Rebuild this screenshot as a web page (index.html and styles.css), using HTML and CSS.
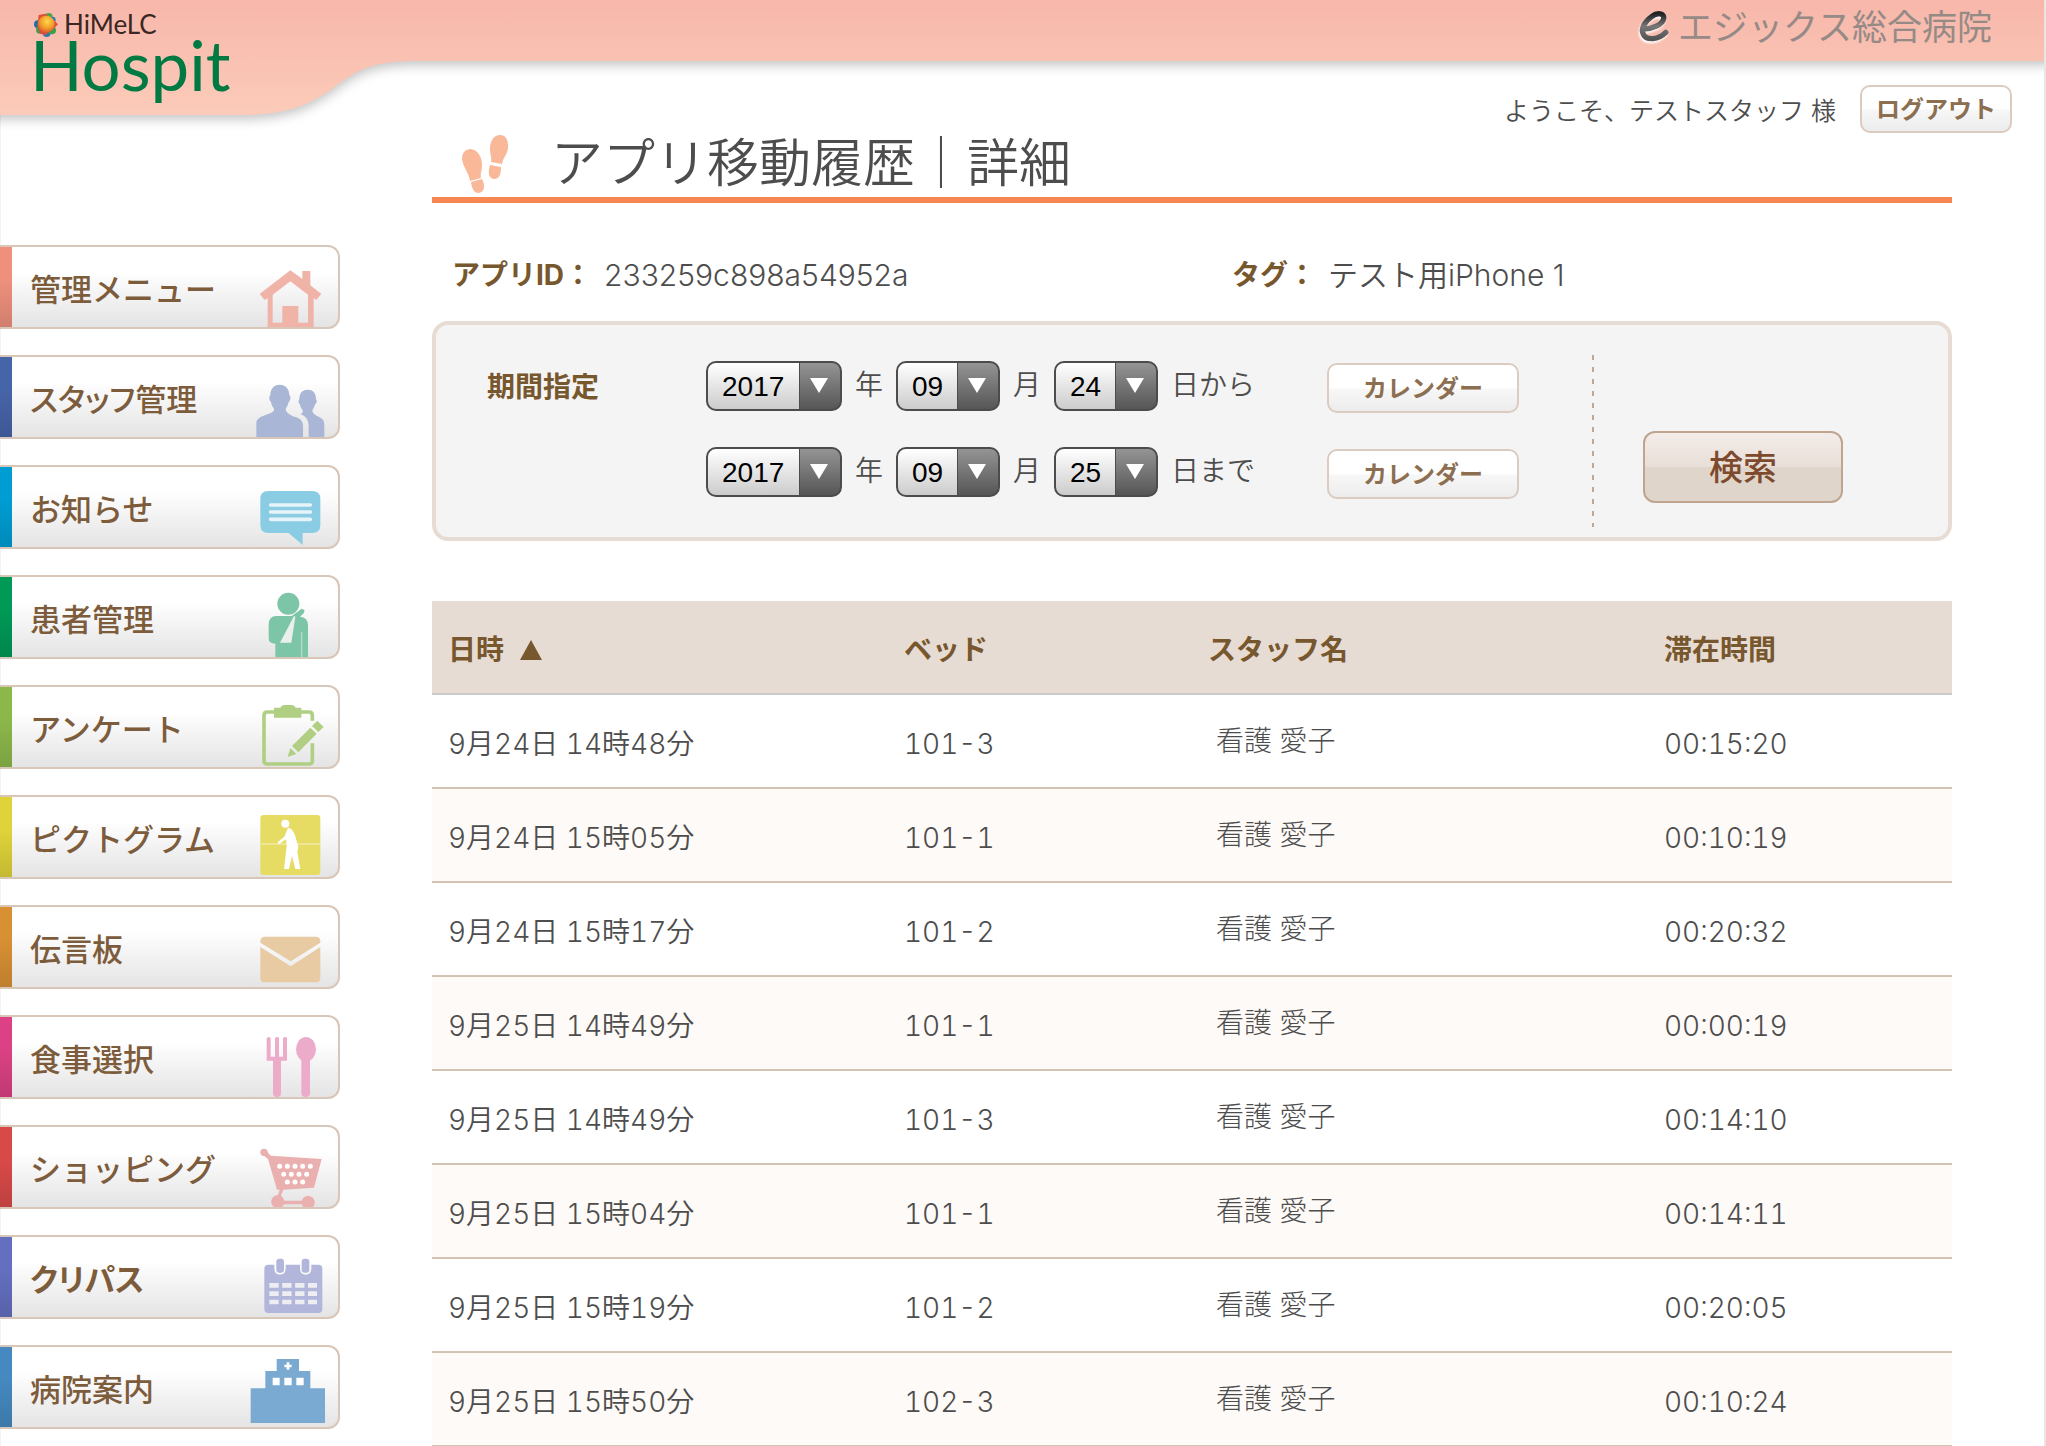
FILE: index.html
```html
<!DOCTYPE html>
<html lang="ja">
<head>
<meta charset="utf-8">
<meta name="viewport" content="width=device-width, initial-scale=1">
<title>アプリ移動履歴｜詳細</title>
<link rel="stylesheet" href="styles.css">
</head>
<body>
<div class="page">
  <header class="header">
    <svg class="header-bg" aria-hidden="true">
      <defs>
        <linearGradient id="pink" gradientUnits="userSpaceOnUse" x1="0" y1="0" x2="0" y2="115">
          <stop offset="0" stop-color="#f7b7aa"/><stop offset="1" stop-color="#fccbb9"/>
        </linearGradient>
      </defs>
      <path fill="url(#pink)" d="M-40-40H6000V61H420C372 61 358 69 332 89C304 109 278 115 240 115H-40Z"/>
    </svg>
    <a class="logo" href="#">
      <span class="logo-top">
        <svg class="logo-mark" viewBox="0 0 72 72" aria-hidden="true">
          <defs><radialGradient id="sun" cx=".55" cy=".35" r=".7"><stop offset="0" stop-color="#ffd84a"/><stop offset=".55" stop-color="#f0a02c"/><stop offset="1" stop-color="#e2502e"/></radialGradient></defs>
          <circle cx="12" cy="34" r="12" fill="#1d6fa8"/><circle cx="44" cy="12" r="12" fill="#4aa64a"/><circle cx="56" cy="20" r="9" fill="#2a7fb5"/>
          <circle cx="18" cy="50" r="12" fill="#3c9d4c"/><circle cx="38" cy="60" r="12" fill="#2f78ad"/><circle cx="54" cy="52" r="12" fill="#3ba04a"/>
          <path fill="#dd5038" d="M14 6L34 2L60 22L72 34L58 48L34 66L18 62L10 38Z"/>
          <circle cx="37" cy="33" r="25" fill="url(#sun)"/>
        </svg>
        HiMeLC
      </span>
      <span class="logo-main">Hospit</span>
    </a>
    <div class="header-side">
      <div class="hospital">
        <svg class="hospital-mark" viewBox="0 0 32 32" fill="none" aria-hidden="true">
          <defs><linearGradient id="steel" x1="0" y1="0" x2="0" y2="1"><stop offset="0" stop-color="#222"/><stop offset=".5" stop-color="#777"/><stop offset="1" stop-color="#555"/></linearGradient></defs>
          <path stroke="url(#steel)" stroke-width="5" stroke-linecap="round" stroke-linejoin="round" d="M7 18C15 18 25 14 26 8C27 3 20 2 15 6C8 11 4 18 7 23C10 29 21 28 28 21"/>
        </svg>
        エジックス総合病院
      </div>
      <div class="welcome"><span>ようこそ、テストスタッフ 様</span><button type="button" class="btn btn-logout">ログアウト</button></div>
    </div>
  </header>

  <div class="layout">
    <nav class="menu">
      <a class="menu-item c-admin" href="#"><span>管理メニュー</span>
        <svg viewBox="740 51 264 240" fill="#f0b3a8"><path d="M870 121L906 147V123H930V166L963 192L948 210L940 204V295H802V204L793 210L778 192ZM870 154L817 194V278H846V228H894V278H923V194Z" fill-rule="evenodd"/></svg></a>
      <a class="menu-item c-staff" href="#"><span>スタッフ管理</span>
        <svg viewBox="740 381 264 240" fill="#a9b6d5"><path d="M838 464C856 464 867 477 867 495C872 500 871 512 865 516C863 526 859 532 856 536C857 550 872 556 888 562C902 567 908 575 908 590V627H768V576C772 562 785 559 798 554C814 548 822 546 821 536C817 531 813 524 812 516C806 511 805 500 810 495C810 477 820 464 838 464Z"/><path d="M922 479C938 479 948 490 947 508C951 514 949 521 944 523C942 532 939 536 936 540C936 552 950 558 960 563C970 568 972 575 972 590V627H925V590C925 572 918 558 900 553C906 551 908 546 907 540C902 535 900 530 899 523C894 520 893 512 897 508C897 490 905 479 922 479Z"/></svg></a>
      <a class="menu-item c-news" href="#"><span>お知らせ</span>
        <svg viewBox="740 711 264 240"><path fill="#8accE4" d="M804 783H936Q960 783 960 807V885Q960 909 936 909H907V945L865 909H804Q780 909 780 885V807Q780 783 804 783Z"/><path stroke="#e6f3f8" stroke-width="11" stroke-linecap="round" d="M811 825H930M811 846H930M811 868H930"/></svg></a>
      <a class="menu-item c-patient" href="#"><span>患者管理</span>
        <svg viewBox="740 51 264 240"><g fill="#7cc5a6"><circle cx="864" cy="131" r="33"/><path d="M828 168H874L904 146L913 151L910 160L899 170Q923 172 923 196V292H825V251Q805 251 805 235V194Q805 168 828 168Z"/></g><path fill="#e9efec" d="M881 168L885 170L873 248H839Z"/><path stroke="#b5dccb" stroke-width="4" d="M904 215V292"/></svg></a>
      <a class="menu-item c-survey" href="#"><span>アンケート</span>
        <svg viewBox="740 381 264 240"><path fill="none" stroke="#b0cf83" stroke-width="11" d="M936 482V466Q936 456 926 456H801Q791 456 791 466V602Q791 612 801 612H926Q936 612 936 602V550"/><path fill="#b0cf83" d="M821 443H840Q843 435 852 435H874Q883 435 886 443H903V473H821ZM951 482L970 501L954 516L935 498ZM930 503L949 521L894 577L875 558ZM870 564L888 582L862 591Z"/></svg></a>
      <a class="menu-item c-picto" href="#"><span>ピクトグラム</span>
        <svg viewBox="740 711 264 240"><rect x="780" y="765" width="180" height="180" rx="10" fill="#e6dc64"/><path stroke="#f0eaa4" stroke-width="5" d="M780 852H960"/><g fill="#fff"><circle cx="855" cy="791" r="12"/><path d="M863 803Q878 806 884 826L894 860L891 876L900 927H885L875 888L866 927H851L859 858L857 838L835 853L832 847L852 830Z"/></g></svg></a>
      <a class="menu-item c-board" href="#"><span>伝言板</span>
        <svg viewBox="740 51 264 240" fill="#e8caa3"><path d="M794 140H946Q960 140 960 154V158L871 214L780 158V154Q780 140 794 140Z"/><path d="M780 171L871 229L960 171V263Q960 277 946 277H794Q780 277 780 263Z"/></svg></a>
      <a class="menu-item c-meal" href="#"><span>食事選択</span>
        <svg viewBox="740 381 264 240" fill="#ebabc9"><path d="M799 445Q805 437 811 445V500H824V445Q830 437 836 445V500H848V445Q854 437 860 445V512H842V610Q842 621 830 621T818 610V512H799Z"/><ellipse cx="917" cy="478" rx="30" ry="37"/><path d="M903 505H929V610Q929 621 916 621T903 610Z"/></svg></a>
      <a class="menu-item c-shop" href="#"><span>ショッピング</span>
        <svg viewBox="740 711 264 240" fill="#eab0af"><circle cx="791" cy="787" r="11"/><path d="M796 780L811 797L964 807L941 893L849 899L842 917Q850 922 852 932H904A20 20 0 1 1 904 943H851A20 20 0 1 1 833 915L838 899H830L803 807L787 794Z"/><path stroke="#fff" stroke-width="15" stroke-linecap="round" stroke-dasharray="0 23" d="M838 829H932M850 852.500H920M861 876H909"/></svg></a>
      <a class="menu-item c-path" href="#"><span>クリパス</span>
        <svg viewBox="740 381 264 240"><g fill="#b2b6da"><path d="M804 464H822V475Q822 494 839 494T856 475V464H899V475Q899 494 916 494T933 475V464H954Q966 464 966 476V597Q966 609 954 609H804Q792 609 792 597V476Q792 464 804 464Z"/><rect x="828" y="446" width="23" height="42" rx="9"/><rect x="904" y="446" width="23" height="42" rx="9"/></g><path stroke="#eeeef2" stroke-width="14" stroke-dasharray="28 10.700" d="M807 526H950M807 551H950M807 576H950"/></svg></a>
      <a class="menu-item c-guide" href="#"><span>病院案内</span>
        <svg viewBox="740 711 264 240"><path fill="#7aa9d2" d="M829 747H896V783H930V835H974V939H751V835H795V783H829Z"/><path fill="#fff" d="M817 803H838V826H817ZM852 803H874V826H852ZM888 803H910V826H888ZM859 757H867V764H874V772H867V779H859V772H852V764H859Z"/></svg></a>
    </nav>

    <main class="main">
      <h1 class="title">
        <svg class="feet" viewBox="0 0 46 58" fill="#f9b898" aria-hidden="true"><path d="M9 14C16 15 20 22 20 30C20 36 18 38 19 43L8 46C7 38 1 32 0 24C0 18 3 14 9 14Z"/><path d="M9 47L20 44C23 50 23 57 17 58C11 58 10 53 9 47Z"/><path d="M38 0C43 0 46 4 46 10C47 18 41 22 40 29L29 27C30 22 28 20 28 14C28 6 32 0 38 0Z"/><path d="M28 30L39 32C39 38 38 44 32 44C26 43 26 37 28 30Z"/></svg>
        アプリ移動履歴｜詳細
      </h1>
      <dl class="info">
        <div class="info-pair"><dt>アプリID：</dt><dd>233259c898a54952a</dd></div>
        <div class="info-pair"><dt>タグ：</dt><dd>テスト用iPhone 1</dd></div>
      </dl>

      <form class="search">
        <span class="search-label" id="term">期間指定</span>
        <div class="ranges" role="group" aria-labelledby="term">
          <div class="range">
            <span class="pick pick-year"><select id="y1"><option>2017</option></select></span><label for="y1">年</label>
            <span class="pick"><select id="m1"><option>09</option></select></span><label for="m1">月</label>
            <span class="pick"><select id="d1"><option>24</option></select></span><label for="d1">日から</label>
            <button type="button" class="btn btn-calendar">カレンダー</button>
          </div>
          <div class="range">
            <span class="pick pick-year"><select id="y2"><option>2017</option></select></span><label for="y2">年</label>
            <span class="pick"><select id="m2"><option>09</option></select></span><label for="m2">月</label>
            <span class="pick"><select id="d2"><option>25</option></select></span><label for="d2">日まで</label>
            <button type="button" class="btn btn-calendar">カレンダー</button>
          </div>
        </div>
        <div class="search-action"><button type="submit" class="btn btn-search">検索</button></div>
      </form>

      <table class="history">
        <thead>
          <tr><th class="w-date">日時<span class="sort"></span></th><th class="w-bed">ベッド</th><th class="w-name">スタッフ名</th><th>滞在時間</th></tr>
        </thead>
        <tbody>
          <tr><td>9月24日 14時48分</td><td>101-3</td><td class="name">看護 愛子</td><td>00:15:20</td></tr>
          <tr><td>9月24日 15時05分</td><td>101-1</td><td class="name">看護 愛子</td><td>00:10:19</td></tr>
          <tr><td>9月24日 15時17分</td><td>101-2</td><td class="name">看護 愛子</td><td>00:20:32</td></tr>
          <tr><td>9月25日 14時49分</td><td>101-1</td><td class="name">看護 愛子</td><td>00:00:19</td></tr>
          <tr><td>9月25日 14時49分</td><td>101-3</td><td class="name">看護 愛子</td><td>00:14:10</td></tr>
          <tr><td>9月25日 15時04分</td><td>101-1</td><td class="name">看護 愛子</td><td>00:14:11</td></tr>
          <tr><td>9月25日 15時19分</td><td>101-2</td><td class="name">看護 愛子</td><td>00:20:05</td></tr>
          <tr><td>9月25日 15時50分</td><td>102-3</td><td class="name">看護 愛子</td><td>00:10:24</td></tr>
        </tbody>
      </table>
    </main>
  </div>
</div>
</body>
</html>
```
FILE: styles.css
```css
* { box-sizing: border-box; }

body {
  margin: 0;
  background: #fff;
  color: #4d4d4d;
  font: 350 28px/1.2 Inter, "Noto Sans CJK JP", sans-serif;
}

.page {
  min-height: 100vh;
  box-shadow: inset -2px 0 #ece4e0, inset 1px 0 #f7f2ef;
}

/* header */
.header {
  position: relative;
  display: flex;
  justify-content: space-between;
  height: 133px;
}
.header-bg {
  position: absolute;
  left: 0;
  top: 0;
  width: calc(100% - 2px);
  height: 140px;
}
.header-bg path { filter: drop-shadow(0 4px 6px rgba(0, 0, 0, .24)); }
.logo {
  position: relative;
  display: flex;
  flex-direction: column;
  padding: 11px 0 0 30px;
  font-family: Lato, sans-serif;
  font-weight: 400;
  text-decoration: none;
}
.logo-top {
  display: flex;
  align-items: center;
  gap: 6px;
  height: 28px;
  padding-left: 4px;
  color: #3a2622;
  font-size: 26px;
}
.logo-mark { width: 24px; height: 24px; }
.logo-main { color: #007a42; font-size: 69px; line-height: 52px; }

.header-side {
  position: relative;
  display: flex;
  flex-direction: column;
  justify-content: space-between;
  align-items: flex-end;
  padding-right: 34px;
}
.hospital {
  display: flex;
  align-items: center;
  gap: 8px;
  height: 54px;
  padding-right: 20px;
  color: #968a87;
  font-size: 35px;
  font-weight: 400;
}
.hospital-mark {
  width: 34px;
  height: 34px;
  filter: drop-shadow(-1px 2px 1px #fff);
}
.welcome {
  display: flex;
  align-items: center;
  gap: 24px;
  font-size: 25px;
}
.welcome span { padding-top: 4px; }

/* buttons */
.btn {
  padding: 0 0 3px;
  border: 2px solid #dccbc0;
  border-radius: 10px;
  background: linear-gradient(#fff 50%, #f7f7f7 52%, #ececec);
  color: #8c6e50;
  font: 700 24px/1 "Noto Sans CJK JP", sans-serif;
}
.btn-logout { width: 152px; height: 48px; }
.btn-calendar { width: 192px; height: 50px; margin-left: 59px; }
.btn-search {
  width: 200px;
  height: 72px;
  border-color: #bfa58f;
  border-radius: 12px;
  background: linear-gradient(#f3ece8, #e9dfd9 49%, #dfd5ca 51%);
  color: #7d4a2e;
  font-size: 34px;
  font-weight: 500;
}

/* layout */
.layout { display: flex; align-items: flex-start; gap: 92px; padding-right: 94px; }
.menu {
  flex: none;
  display: flex;
  flex-direction: column;
  gap: 26px;
  width: 340px;
  padding-top: 112px;
}
.menu-item {
  display: flex;
  align-items: center;
  height: 84px;
  padding-right: 3px;
  border: 2px solid #d8c6b8;
  border-left: 0;
  border-radius: 0 12px 12px 0;
  background: linear-gradient(#fff 30%, #e4e4e4);
  color: #7d5c3c;
  font: 500 31px/1 "Noto Sans CJK JP", sans-serif;
  text-decoration: none;
}
.menu-item::before {
  content: "";
  width: 12px;
  height: 80px;
  margin-right: 18px;
  background: linear-gradient(transparent 40%, rgba(0, 0, 0, .12)) var(--stripe);
}
.menu-item svg { width: 88px; height: 80px; margin-left: auto; }
.c-admin { --stripe: #ee907c; }
.c-staff { --stripe: #4664a8; font-feature-settings: "palt"; }
.c-news { --stripe: #009dd2; }
.c-patient { --stripe: #009956; }
.c-survey { --stripe: #8cb84a; }
.c-picto { --stripe: #dfd339; }
.c-board { --stripe: #d89034; }
.c-meal { --stripe: #db4184; }
.c-shop { --stripe: #d84a48; }
.c-path { --stripe: #646fc0; font-weight: 700; font-feature-settings: "palt"; }
.c-guide { --stripe: #4589c0; }

.main { flex: 1; min-width: 0; }
.title {
  display: flex;
  align-items: center;
  gap: 43px;
  height: 70px;
  margin: 0;
  padding: 0 0 3px 30px;
  border-bottom: 6px solid #f88650;
  font-size: 52px;
  font-weight: 350;
  line-height: 60px;
}
.feet { width: 46px; height: 58px; }

.info {
  display: grid;
  grid-template-columns: 52fr 48fr;
  margin: 0;
  padding: 52px 0 26px 20px;
  line-height: 40px;
}
.info-pair { display: flex; gap: 12px; }
.info dt { color: #77572d; font-weight: 700; }
.info dd { margin: 0; font-size: 30px; }

/* search form */
.search {
  display: flex;
  height: 220px;
  padding: 30px 0 10px 51px;
  border: 4px solid #e7dcd4;
  border-radius: 16px;
  background: #f4f4f4;
}
.search-label {
  width: 219px;
  line-height: 64px;
  color: #77572d;
  font-weight: 700;
}
.ranges { display: flex; flex-direction: column; gap: 36px; padding-top: 6px; }
.range { display: flex; align-items: center; gap: 13px; height: 50px; }
.range .btn { position: relative; top: 2px; }
.pick { position: relative; width: 104px; height: 50px; }
.pick-year { width: 136px; }
.pick select {
  appearance: none;
  width: 100%;
  height: 100%;
  padding: 0 0 0 14px;
  border: 2px solid #4c4c4c;
  border-radius: 10px;
  background:
    linear-gradient(#4c4c4c, #4c4c4c) right 40px top / 1px 100% no-repeat,
    linear-gradient(#949494, #565656) right / 40px 100% no-repeat,
    linear-gradient(#fff, #ccc);
  color: #000;
  font: 28px "Liberation Sans", sans-serif;
}
.pick::after {
  content: "";
  position: absolute;
  right: 14px;
  top: 17px;
  border: solid transparent;
  border-width: 15px 9px 0;
  border-top-color: #fff;
  pointer-events: none;
}
.search-action {
  height: 172px;
  margin-left: 73px;
  padding: 76px 0 0 51px;
  background: repeating-linear-gradient(#bfa88f 0 5px, transparent 5px 12px) left / 2px 100% no-repeat;
}

/* history table */
.history {
  width: 100%;
  margin-top: 60px;
  border-spacing: 0;
  table-layout: fixed;
  font-size: 28px;
  font-feature-settings: "tnum";
}
.history th, .history td {
  height: 94px;
  padding: 7px 0 0 16px;
  text-align: left;
  white-space: nowrap;
}
.history th {
  border-bottom: 2px solid #cbcbcb;
  background: #e7dcd4;
  color: #77572d;
  font-weight: 700;
}
.history td { border-bottom: 2px solid #d3c3b2; }
.history tr:nth-child(even) td { background: #fefaf7; }
.history .name { padding: 2px 0 0 24px; font-weight: 300; }
.w-date { width: 30%; }
.w-bed { width: 20%; }
.w-name { width: 30%; }
.sort {
  display: inline-block;
  margin-left: 16px;
  border: solid transparent;
  border-width: 0 11px 20px;
  border-bottom-color: #77572d;
}
```
